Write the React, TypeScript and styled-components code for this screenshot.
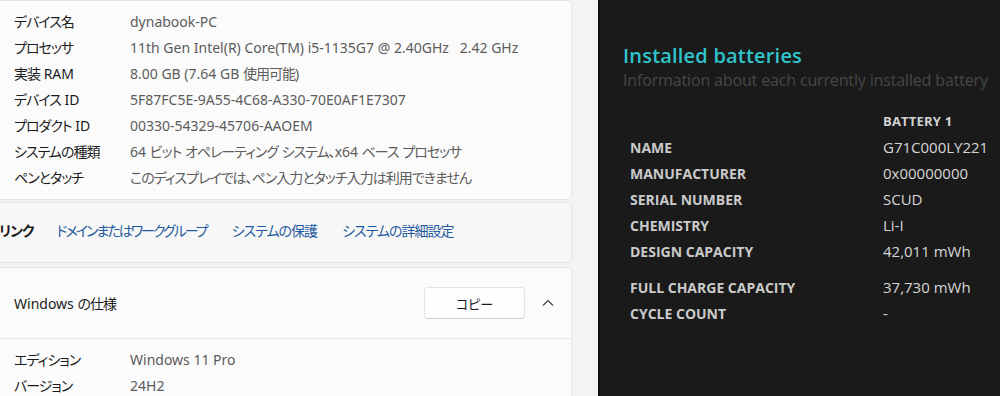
import React from 'react';
import styled, { createGlobalStyle } from 'styled-components';

const GlobalStyle = createGlobalStyle`
	html, body {
		margin: 0;
		padding: 0;
		background: #f3f3f3;
	}
	body {
		font-family: "Noto Sans", "Noto Sans CJK JP", sans-serif;
		font-feature-settings: "palt";
	}
`;

const Page = styled.div`
	display: flex;
	width: 1000px;
	height: 396px;
	overflow: hidden;
`;

const SettingsPane = styled.div`
	width: 598px;
	flex-shrink: 0;
	background: #f3f3f3;
	display: flex;
	flex-direction: column;
	padding-right: 26px;
	box-sizing: border-box;
`;

interface ICardProps {
	tone?: 'plain' | 'muted';
	gap?: number;
}
const Card = styled.section<ICardProps>`
	background: ${({ tone }) => tone === 'muted' ? '#f7f7f7' : '#fbfbfb'};
	border: 1px solid #e5e5e5;
	border-left: none;
	border-radius: 0 5px 5px 0;
	margin-top: ${({ gap }) => gap ?? 0}px;
`;

// Japanese runs are set tighter, like Yu Gothic UI's proportional kana
const Jp = styled.span`
	letter-spacing: -1px;
`;

const tighten = (text: string) =>
	text.split(/([\u3000-\u30ff\u4e00-\u9fff\uff00-\uffef]+)/).map((part, i) =>
		i % 2 ? <Jp key={i}>{part}</Jp> : part
	);

const SpecList = styled.div`
	display: flex;
	flex-direction: column;
	padding: 7px 0 9px;
`;

const SpecRow = styled.div`
	display: grid;
	grid-template-columns: 116px 1fr;
	height: 26px;
	align-items: center;
	padding-left: 14px;
	font-size: 14px;
	white-space: nowrap;
`;

const SpecLabel = styled.span`
	color: #1b1b1b;
`;

const SpecValue = styled.span`
	color: #5c5c5c;
`;

const LinksBar = styled.div`
	display: flex;
	align-items: center;
	height: 59px;
	padding-bottom: 5px;
	box-sizing: border-box;
	font-size: 14px;
	white-space: nowrap;
`;

const LinksTitle = styled.span`
	color: #1b1b1b;
	font-weight: 600;
	margin-left: -1px;
	margin-right: 23px;
`;

const Link = styled.a<{ narrow?: boolean }>`
	color: #1f5a9e;
	text-decoration: none;
	margin-right: 25px;

	${Jp} {
		letter-spacing: ${({ narrow }) => narrow ? '-2px' : '-1px'};
	}
`;

const SectionHeader = styled.div`
	display: flex;
	align-items: center;
	height: 70px;
	padding-left: 14px;
	border-bottom: 1px solid #e8e8e8;
	font-size: 14px;
	color: #1b1b1b;
`;

const HeaderTitle = styled.span`
	flex: 1;
`;

const CopyButton = styled.button`
	width: 101px;
	height: 32px;
	background: #fefefe;
	border: 1px solid #e3e3e3;
	border-bottom-color: #d2d2d2;
	border-radius: 4px;
	font-family: "Noto Sans CJK JP", sans-serif;
	font-feature-settings: "palt";
	font-size: 13px;
	color: #1b1b1b;
	padding: 0;
`;

const ChevronButton = styled.span`
	display: flex;
	align-items: center;
	justify-content: center;
	width: 46px;
	height: 32px;
`;

const BatteryPane = styled.div`
	flex: 1;
	background: #1a1a1a;
	border-left: 2px solid #0d0d0d;
	padding: 43px 0 0 23px;
	font-family: "Open Sans", "Noto Sans", sans-serif;
	white-space: nowrap;
	overflow: hidden;
`;

const PaneTitle = styled.h2`
	margin: 0;
	font-size: 20px;
	line-height: 26px;
	font-weight: 600;
	color: #30c4cc;
	letter-spacing: 0.2px;
`;

const PaneSubtitle = styled.p`
	margin: 0;
	font-size: 16px;
	line-height: 22px;
	font-weight: 400;
	color: #474747;
	letter-spacing: -0.15px;
`;

const BatteryTable = styled.div`
	display: flex;
	flex-direction: column;
	margin: 17px 0 0 7px;
`;

const BatteryRow = styled.div<{ spaced?: boolean }>`
	display: flex;
	align-items: center;
	height: 26px;
	margin-top: ${({ spaced }) => spaced ? '10px' : '0'};
`;

const FieldLabel = styled.span`
	width: 253px;
	flex-shrink: 0;
	font-size: 14px;
	font-weight: 700;
	color: #cacaca;
`;

const ColumnHead = styled.span`
	font-size: 13px;
	font-weight: 700;
	color: #d2d2d2;
	letter-spacing: 0.2px;
`;

const FieldValue = styled.span`
	font-size: 15px;
	color: #d6d6d6;
`;

const specs = [
	['デバイス名', 'dynabook-PC'],
	['プロセッサ', '11th Gen Intel(R) Core(TM) i5-1135G7 @ 2.40GHz\u00a0\u00a0\u00a02.42 GHz'],
	['実装 RAM', '8.00 GB (7.64 GB 使用可能)'],
	['デバイス ID', '5F87FC5E-9A55-4C68-A330-70E0AF1E7307'],
	['プロダクト ID', '00330-54329-45706-AAOEM'],
	['システムの種類', '64 ビット オペレーティング システム、x64 ベース プロセッサ'],
	['ペンとタッチ', 'このディスプレイでは、ペン入力とタッチ入力は利用できません'],
];

const windowsSpecs = [
	['エディション', 'Windows 11 Pro'],
	['バージョン', '24H2'],
];

const links = ['ドメインまたはワークグループ', 'システムの保護', 'システムの詳細設定'];

const battery = [
	['NAME', 'G71C000LY221'],
	['MANUFACTURER', '0x00000000'],
	['SERIAL NUMBER', 'SCUD'],
	['CHEMISTRY', 'Li-I'],
	['DESIGN CAPACITY', '42,011 mWh'],
	['FULL CHARGE CAPACITY', '37,730 mWh'],
	['CYCLE COUNT', '-'],
];

const App: React.FC = () => (
	<Page>
		<GlobalStyle/>
		<SettingsPane>
			<Card>
				<SpecList>
					{specs.map(([label, value]) => (
						<SpecRow key={label}>
							<SpecLabel>{tighten(label)}</SpecLabel>
							<SpecValue>{tighten(value)}</SpecValue>
						</SpecRow>
					))}
				</SpecList>
			</Card>
			<Card tone="muted" gap={2}>
				<LinksBar>
					<LinksTitle>{tighten('リンク')}</LinksTitle>
					{links.map((link, i) => <Link key={link} narrow={i === 0}>{tighten(link)}</Link>)}
				</LinksBar>
			</Card>
			<Card gap={4}>
				<SectionHeader>
					<HeaderTitle>Windows {tighten('の仕様')}</HeaderTitle>
					<CopyButton>コピー</CopyButton>
					<ChevronButton>
						<svg width="12" height="8" viewBox="0 0 12 8">
							<polyline points="1,6.5 6,1.5 11,6.5" fill="none" stroke="#444" strokeWidth="1.2"/>
						</svg>
					</ChevronButton>
				</SectionHeader>
				<SpecList>
					{windowsSpecs.map(([label, value]) => (
						<SpecRow key={label}>
							<SpecLabel>{tighten(label)}</SpecLabel>
							<SpecValue>{value}</SpecValue>
						</SpecRow>
					))}
				</SpecList>
			</Card>
		</SettingsPane>
		<BatteryPane>
			<PaneTitle>Installed batteries</PaneTitle>
			<PaneSubtitle>Information about each currently installed battery</PaneSubtitle>
			<BatteryTable>
				<BatteryRow>
					<FieldLabel/>
					<ColumnHead>BATTERY 1</ColumnHead>
				</BatteryRow>
				{battery.map(([label, value]) => (
					<BatteryRow key={label} spaced={label === 'FULL CHARGE CAPACITY'}>
						<FieldLabel>{label}</FieldLabel>
						<FieldValue>{value}</FieldValue>
					</BatteryRow>
				))}
			</BatteryTable>
		</BatteryPane>
	</Page>
);

export default App;
